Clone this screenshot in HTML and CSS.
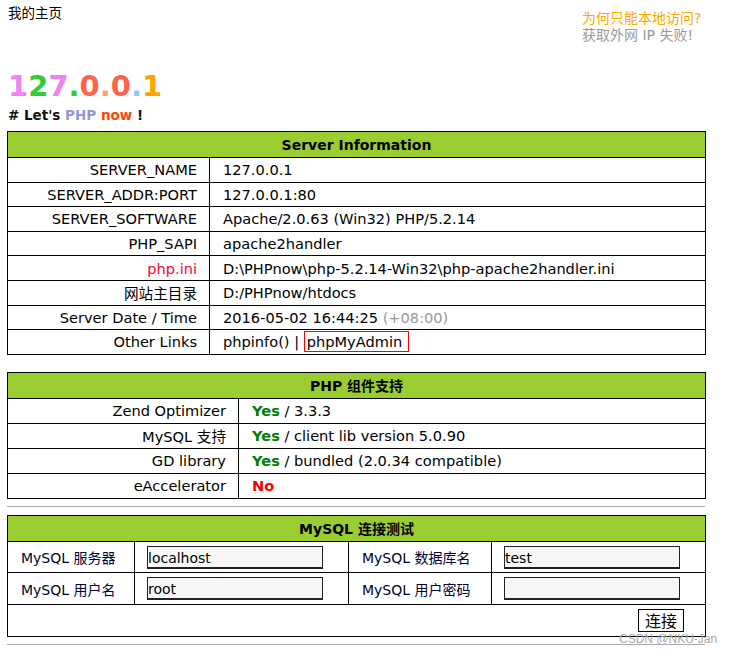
FILE: index.html
```html
<!DOCTYPE html>
<html lang="zh-CN">
<head>
<meta charset="utf-8">
<title>我的主页</title>
<link rel="stylesheet" href="styles.css">
</head>
<body>
<div class="top">
  <div class="home">我的主页</div>
  <div class="notice">
    <div class="why">为何只能本地访问?</div>
    <div class="fail">获取外网 IP 失败!</div>
  </div>
</div>
<h1 class="ip"><span class="violet">1</span><span class="lime">2</span><span class="violet">7</span><span class="lime">.</span><span class="tomato">0</span><span class="salmon">.</span><span class="tomato">0</span><span class="sky">.</span><span class="orange">1</span></h1>
<p class="slogan"># Let's <span class="php">PHP</span> <span class="now">now</span> !</p>

<table class="grid server">
  <tr><th colspan="2">Server Information</th></tr>
  <tr><td class="k">SERVER_NAME</td><td class="v">127.0.0.1</td></tr>
  <tr><td class="k">SERVER_ADDR:PORT</td><td class="v">127.0.0.1:80</td></tr>
  <tr><td class="k">SERVER_SOFTWARE</td><td class="v">Apache/2.0.63 (Win32) PHP/5.2.14</td></tr>
  <tr><td class="k">PHP_SAPI</td><td class="v">apache2handler</td></tr>
  <tr><td class="k"><span class="red">php.ini</span></td><td class="v">D:\PHPnow\php-5.2.14-Win32\php-apache2handler.ini</td></tr>
  <tr><td class="k">网站主目录</td><td class="v">D:/PHPnow/htdocs</td></tr>
  <tr><td class="k">Server Date / Time</td><td class="v">2016-05-02 16:44:25 <span class="gray">(+08:00)</span></td></tr>
  <tr><td class="k">Other Links</td><td class="v">phpinfo() | <span class="boxed">phpMyAdmin</span></td></tr>
</table>

<table class="grid php-ext">
  <tr><th colspan="2">PHP 组件支持</th></tr>
  <tr><td class="k">Zend Optimizer</td><td class="v"><b class="yes">Yes</b> / 3.3.3</td></tr>
  <tr><td class="k">MySQL 支持</td><td class="v"><b class="yes">Yes</b> / client lib version 5.0.90</td></tr>
  <tr><td class="k">GD library</td><td class="v"><b class="yes">Yes</b> / bundled (2.0.34 compatible)</td></tr>
  <tr><td class="k">eAccelerator</td><td class="v"><b class="no">No</b></td></tr>
</table>

<hr class="rule">
<table class="grid mysql">
  <tr><th colspan="4">MySQL 连接测试</th></tr>
  <tr>
    <td class="lbl c1">MySQL 服务器</td>
    <td class="fld c2"><input class="inp" type="text" value="localhost"></td>
    <td class="lbl c3">MySQL 数据库名</td>
    <td class="fld c4"><input class="inp" type="text" value="test"></td>
  </tr>
  <tr>
    <td class="lbl">MySQL 用户名</td>
    <td class="fld"><input class="inp" type="text" value="root"></td>
    <td class="lbl">MySQL 用户密码</td>
    <td class="fld"><input class="inp" type="password" value=""></td>
  </tr>
  <tr><td class="act" colspan="4"><button class="btn" type="button">连接</button></td></tr>
</table>
<hr class="rule">

<div class="watermark">CSDN @NKU-Jan</div>
</body>
</html>
```

FILE: styles.css
```css
html, body { margin: 0; padding: 0; background: #fff; }
body {
  font-family: "DejaVu Sans", Verdana, "Noto Sans CJK SC", sans-serif;
  font-size: 14px;
  color: #000;
  position: relative;
  min-height: 654px;
}
.top {
  display: flex;
  justify-content: space-between;
  padding: 4px 0 0 8px;
}
.home {
  font-family: "Noto Sans CJK SC", sans-serif;
  font-size: 13.5px;
  line-height: 17px;
}
.notice {
  margin-top: 6px;
  width: 148px;
  font-family: "DejaVu Sans", "Noto Sans CJK SC", sans-serif;
  font-size: 14px;
  line-height: 17px;
}
.why { color: #ffa500; }
.fail { color: #999; }

.ip {
  margin: 28px 0 0 8px;
  font-family: "DejaVu Sans", sans-serif;
  font-weight: bold;
  font-size: 29px;
  line-height: 29px;
}
.violet { color: #ee82ee; }
.lime { color: #32cd32; }
.tomato { color: #ff6347; }
.salmon { color: #ffa07a; }
.sky { color: #87cefa; }
.orange { color: #ffa500; }

.slogan {
  margin: 6px 0 0 8px;
  font-size: 13.5px;
  font-weight: bold;
  line-height: 16px;
  color: #111;
}
.slogan .php { color: #8b9bd9; }
.slogan .now { color: #ff4500; }

.grid {
  border-collapse: collapse;
  width: 699px;
  margin-left: 7px;
  border: 1px solid #000;
}
.grid th {
  background: #9acd32;
  border: 1px solid #000;
  font-weight: bold;
  font-size: 14px;
  text-align: center;
  padding: 0;
  height: 25px;
}
.grid td {
  border: 1px solid #000;
  padding: 0;
  font-size: 14.6px;
}
.server { margin-top: 8px; }
.server td { height: 23.6px; }
.server td.k { width: 189px; }
.grid td.k { text-align: right; padding-right: 12px; }
.grid td.v { padding-left: 13px; }
.red { color: #ff0033; }
.gray { color: #999; }
.boxed {
  border: 1px solid #ff0000;
  padding: 1px 6px 1px 2px;
}

.php-ext { margin-top: 17px; }
.php-ext td { height: 24px; }
.php-ext td.k { width: 218px; }
.yes { color: #008000; }
.no { color: #ff0000; }

.rule {
  width: 698px;
  margin: 7px 0 0 7px;
  border: 0;
  border-top: 1px solid #aaa;
  height: 0;
}
.mysql { margin-top: 8px; }
.mysql th { height: 25px; }
.mysql td { height: 30.6px; }
.grid td.lbl { padding-left: 13px; color: #000033; font-size: 14px; }
.grid td.c1 { width: 113px; }
.grid td.c2 { width: 201px; }
.grid td.c3 { width: 129px; }
.grid td.fld { padding-left: 12px; }
.inp {
  box-sizing: border-box;
  width: 176px;
  height: 23px;
  margin: 0;
  padding: 2px 0 0;
  border: 1px solid #222;
  border-bottom-width: 2px;
  background: #f7f7f7;
  font-family: "DejaVu Sans", sans-serif;
  font-size: 14px;
  color: #000;
  vertical-align: middle;
}
.grid td.act { text-align: right; padding-right: 21px; }
.btn {
  box-sizing: border-box;
  width: 46px;
  height: 23px;
  margin: 0;
  padding: 0;
  border: 1px solid #000;
  background: #fff;
  font-family: "Noto Sans CJK SC", sans-serif;
  font-size: 16px;
  line-height: 20px;
  color: #000;
  vertical-align: middle;
}
.watermark {
  position: absolute;
  left: 619px;
  top: 632px;
  font-family: "Liberation Sans", sans-serif;
  font-size: 12px;
  color: #aaa;
}
```
